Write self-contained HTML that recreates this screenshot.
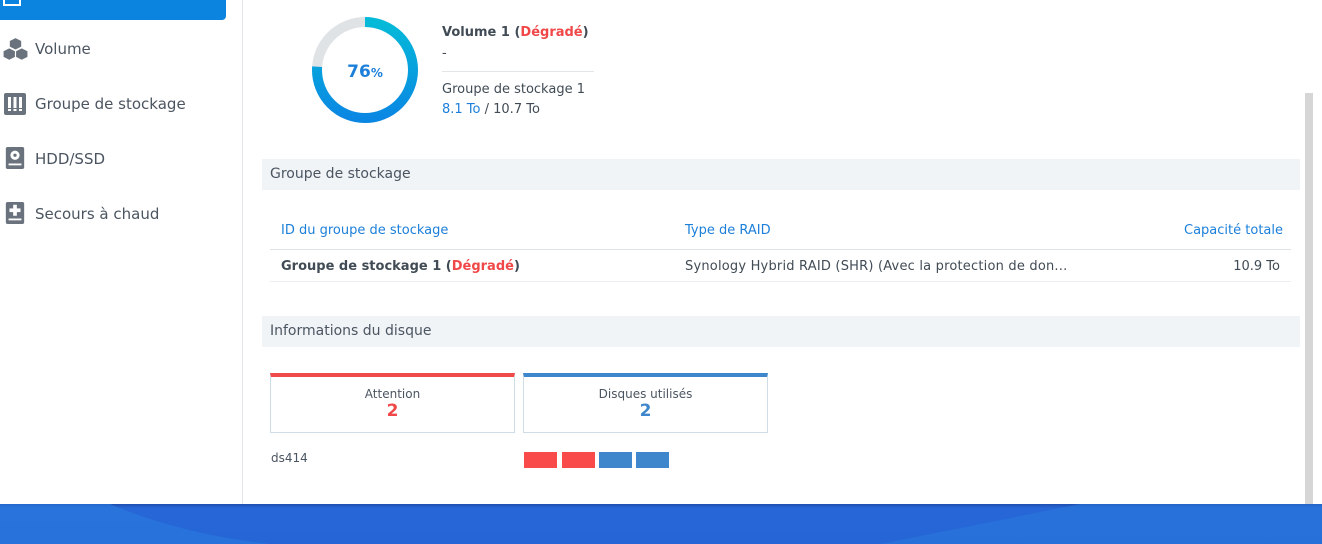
<!DOCTYPE html>
<html><head><meta charset="utf-8"><style>
*{margin:0;padding:0;box-sizing:border-box}
body{width:1322px;height:544px;overflow:hidden;background:#fff;font-family:"DejaVu Sans","Liberation Sans",sans-serif;position:relative;color:#414b55}
.abs{position:absolute;white-space:nowrap}
.side{left:0;top:0;width:243px;height:504px;border-right:1px solid #e3e6e9;background:#fff}
.sel{left:0;top:-10px;width:226px;height:30px;background:#0b84e0;border-radius:0 0 4px 0}
.item{left:35px;font-size:15px;color:#4b5561}
.ico{left:4px;width:22px;height:22px}
.sec{left:262px;width:1038px;height:31px;background:#f1f4f7;font-size:14px;color:#4b5561;padding:7px 8px}
.th{font-size:13px;color:#1c7fd9}
.td{font-size:13px;color:#414b55}
.card{top:373px;width:245px;height:60px;border:1px solid #cfdde8;text-align:center}
.card .t{font-size:12px;color:#4b5561;margin-top:10px}
.card .n{font-size:17px;font-weight:bold;margin-top:0px}
.sq{top:452px;width:33px;height:16px}
</style></head><body>
<div class="abs side"></div>
<div class="abs sel"></div>
<svg class="abs" style="left:2px;top:-4px" width="22" height="12"><rect x="2" y="0" width="16" height="9" fill="none" stroke="#fff" stroke-width="2"/></svg>
<svg class="abs ico" style="top:37px;left:3px;width:25px;height:25px" viewBox="0 0 22 22"><g fill="#6a737d"><path d="M11 1l5 2.5v5L11 11 6 8.5v-5z"/><path d="M5.5 10l5 2.5v5L5.5 20 .5 17.5v-5z"/><path d="M16.5 10l5 2.5v5l-5 2.5-5-2.5v-5z"/></g></svg>
<div class="abs item" style="top:40px">Volume</div>
<svg class="abs ico" style="top:93px" viewBox="0 0 22 22"><rect x="0" y="0" width="22" height="22" rx="2" fill="#6a737d"/><g fill="#fff"><rect x="4" y="4" width="3" height="11"/><rect x="9.5" y="4" width="3" height="11"/><rect x="15" y="4" width="3" height="11"/><rect x="4" y="16" width="3" height="2"/><rect x="9.5" y="16" width="3" height="2"/><rect x="15" y="16" width="3" height="2"/></g></svg>
<div class="abs item" style="top:95px">Groupe de stockage</div>
<svg class="abs ico" style="top:147px" viewBox="0 0 22 24"><rect x="1" y="0" width="20" height="24" rx="2" fill="#6a737d"/><circle cx="11" cy="9" r="5" fill="#fff"/><circle cx="11" cy="9" r="1.8" fill="#6a737d"/><rect x="4" y="18" width="14" height="2" fill="#fff"/></svg>
<div class="abs item" style="top:150px">HDD/SSD</div>
<svg class="abs ico" style="top:202px" viewBox="0 0 22 24"><rect x="1" y="0" width="20" height="24" rx="2" fill="#6a737d"/><rect x="9" y="3" width="4" height="12" fill="#fff"/><rect x="5" y="7" width="12" height="4" fill="#fff"/><rect x="4" y="18" width="14" height="2" fill="#fff"/></svg>
<div class="abs item" style="top:205px">Secours à chaud</div>

<svg class="abs" style="left:312px;top:17px" width="106" height="106" viewBox="0 0 106 106">
<defs><linearGradient id="g" x1="1" y1="0" x2="0" y2="0"><stop offset="0" stop-color="#05bad8"/><stop offset="1" stop-color="#0a87e3"/></linearGradient></defs>
<circle cx="53" cy="53" r="48" fill="none" stroke="#e0e3e6" stroke-width="10"/>
<circle cx="53" cy="53" r="48" fill="none" stroke="url(#g)" stroke-width="10" stroke-dasharray="229.2 301.6" transform="rotate(-90 53 53)"/>
<text x="53" y="60" text-anchor="middle" font-family="DejaVu Sans" font-weight="bold" font-size="17" fill="#1c7fd9">76<tspan font-size="12">%</tspan></text>
</svg>
<div class="abs" style="left:442px;top:25px;font-size:13px;font-weight:bold;color:#414b55">Volume 1 (<span style="color:#f04848">Dégradé</span>)</div>
<div class="abs" style="left:442px;top:46px;font-size:13px">-</div>
<div class="abs" style="left:442px;top:71px;width:152px;border-top:1px solid #e3e6e9"></div>
<div class="abs" style="left:442px;top:82px;font-size:13px">Groupe de stockage 1</div>
<div class="abs" style="left:442px;top:102px;font-size:13px"><span style="color:#1c7fd9">8.1 To</span> / 10.7 To</div>

<div class="abs sec" style="top:159px">Groupe de stockage</div>
<div class="abs th" style="left:281px;top:223px">ID du groupe de stockage</div>
<div class="abs th" style="left:685px;top:223px">Type de RAID</div>
<div class="abs th" style="right:39px;top:223px">Capacité totale</div>
<div class="abs" style="left:270px;top:249px;width:1021px;border-top:1px solid #dde3e9"></div>
<div class="abs td" style="left:281px;top:259px;font-weight:bold">Groupe de stockage 1 (<span style="color:#f04848">Dégradé</span>)</div>
<div class="abs td" style="left:685px;top:259px;letter-spacing:0.2px">Synology Hybrid RAID (SHR) (Avec la protection de don...</div>
<div class="abs td" style="right:42px;top:259px">10.9 To</div>
<div class="abs" style="left:270px;top:281px;width:1021px;border-top:1px solid #eceff2"></div>

<div class="abs sec" style="top:316px">Informations du disque</div>
<div class="abs card" style="left:270px;border-top:4px solid #f04b4b"><div class="t">Attention</div><div class="n" style="color:#f04848">2</div></div>
<div class="abs card" style="left:523px;border-top:4px solid #3e87cc"><div class="t">Disques utilisés</div><div class="n" style="color:#3e87cc">2</div></div>
<div class="abs" style="left:271px;top:451px;font-size:12px;color:#4b5561">ds414</div>
<div class="abs sq" style="left:524px;background:#fa4b4b"></div>
<div class="abs sq" style="left:562px;background:#fa4b4b"></div>
<div class="abs sq" style="left:599px;background:#3e87cc"></div>
<div class="abs sq" style="left:636px;background:#3e87cc"></div>

<div class="abs" style="left:1305px;top:93px;width:8px;height:411px;background:#d6d6d6"></div>
<div class="abs" style="left:0;top:504px;width:1322px;height:40px;background:linear-gradient(180deg,#1f4fb0 0,#2766d6 4px,#2565d5 100%)"></div>
<svg class="abs" style="left:0;top:504px" width="1322" height="40"><path d="M0 0H110Q180 30 270 40H0Z" fill="#2a7be0" opacity=".6"/><path d="M1080 0H1322V40H880Q980 20 1080 0Z" fill="#2a7be0" opacity=".5"/></svg>
</body></html>
